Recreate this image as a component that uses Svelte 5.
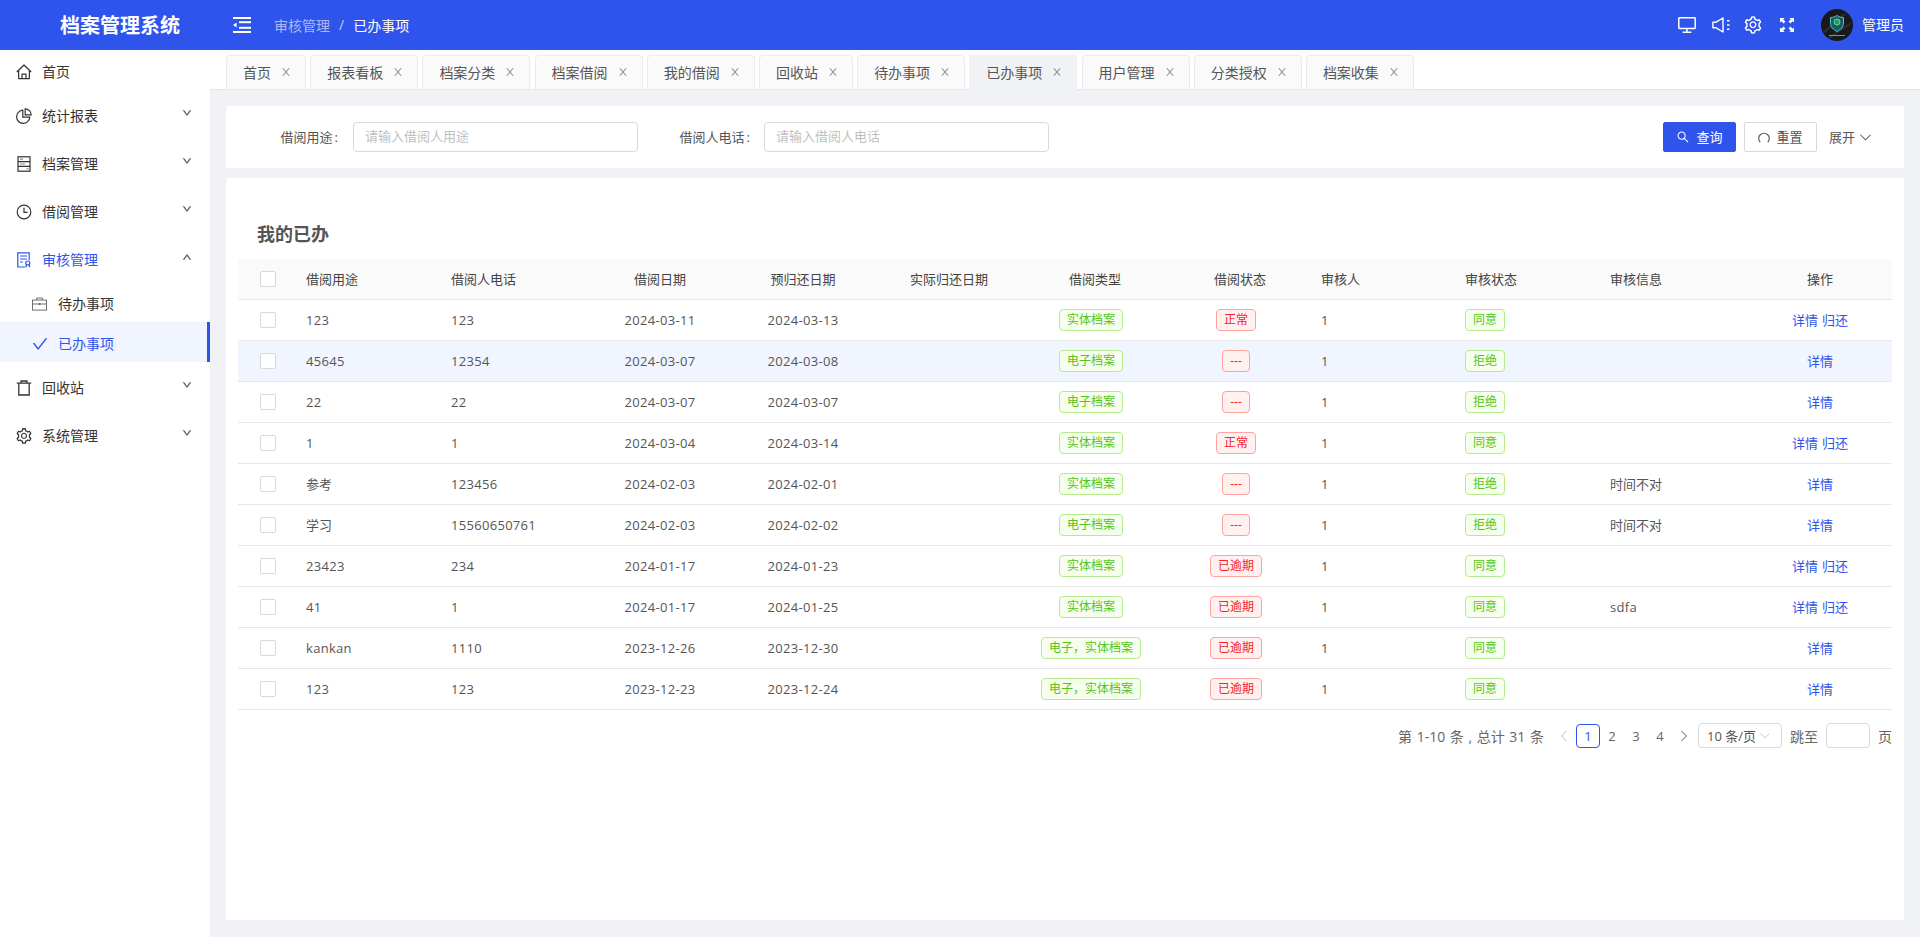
<script lang="ts">
  const tabs = ['首页', '报表看板', '档案分类', '档案借阅', '我的借阅', '回收站', '待办事项', '已办事项', '用户管理', '分类授权', '档案收集'];
  const activeTab = '已办事项';

  const columns = [
    { title: '借阅用途', width: 145 },
    { title: '借阅人电话', width: 162 },
    { title: '借阅日期', width: 126, center: true },
    { title: '预归还日期', width: 160, center: true },
    { title: '实际归还日期', width: 132, center: true },
    { title: '借阅类型', width: 160, center: true },
    { title: '借阅状态', width: 130, center: true },
    { title: '审核人', width: 144 },
    { title: '审核状态', width: 145 },
    { title: '审核信息', width: 154 },
    { title: '操作', width: 144, center: true },
  ];

  const rows = [
    { use: '123', phone: '123', from: '2024-03-11', to: '2024-03-13', type: '实体档案', state: '正常', audit: '同意', info: '', back: true },
    { use: '45645', phone: '12354', from: '2024-03-07', to: '2024-03-08', type: '电子档案', state: '---', audit: '拒绝', info: '', back: false },
    { use: '22', phone: '22', from: '2024-03-07', to: '2024-03-07', type: '电子档案', state: '---', audit: '拒绝', info: '', back: false },
    { use: '1', phone: '1', from: '2024-03-04', to: '2024-03-14', type: '实体档案', state: '正常', audit: '同意', info: '', back: true },
    { use: '参考', phone: '123456', from: '2024-02-03', to: '2024-02-01', type: '实体档案', state: '---', audit: '拒绝', info: '时间不对', back: false },
    { use: '学习', phone: '15560650761', from: '2024-02-03', to: '2024-02-02', type: '电子档案', state: '---', audit: '拒绝', info: '时间不对', back: false },
    { use: '23423', phone: '234', from: '2024-01-17', to: '2024-01-23', type: '实体档案', state: '已逾期', audit: '同意', info: '', back: true },
    { use: '41', phone: '1', from: '2024-01-17', to: '2024-01-25', type: '实体档案', state: '已逾期', audit: '同意', info: 'sdfa', back: true },
    { use: 'kankan', phone: '1110', from: '2023-12-26', to: '2023-12-30', type: '电子，实体档案', state: '已逾期', audit: '同意', info: '', back: false },
    { use: '123', phone: '123', from: '2023-12-23', to: '2023-12-24', type: '电子，实体档案', state: '已逾期', audit: '同意', info: '', back: false },
  ];

  // CJK cells sit a pixel higher than latin ones
  const isCjk = (s: string) => /[^\x00-\x7f]/.test(s);

  const gear = 'M924.8 625.7l-65.5-56c3.1-19 4.7-38.4 4.7-57.8s-1.6-38.8-4.7-57.8l65.5-56a32.03 32.03 0 0 0 9.3-35.2l-.9-2.6a443.74 443.74 0 0 0-79.7-137.9l-1.8-2.1a32.12 32.12 0 0 0-35.1-9.5l-81.3 28.9c-30-24.6-63.5-44-99.7-57.6l-15.7-85a32.05 32.05 0 0 0-25.8-25.7l-2.7-.5c-52.1-9.4-106.9-9.4-159 0l-2.7.5a32.05 32.05 0 0 0-25.8 25.7l-15.8 85.4a351.86 351.86 0 0 0-99 57.4l-81.9-29.1a32 32 0 0 0-35.1 9.5l-1.8 2.1a446.02 446.02 0 0 0-79.7 137.9l-.9 2.6c-4.5 12.5-.8 26.5 9.3 35.2l66.3 56.6c-3.1 18.8-4.6 38-4.6 57.1 0 19.2 1.5 38.4 4.6 57.1L99 625.5a32.03 32.03 0 0 0-9.3 35.2l.9 2.6c18.1 50.4 44.9 96.9 79.7 137.9l1.8 2.1a32.12 32.12 0 0 0 35.1 9.5l81.9-29.1c29.8 24.5 63.1 43.9 99 57.4l15.8 85.4a32.05 32.05 0 0 0 25.8 25.7l2.7.5a449.4 449.4 0 0 0 159 0l2.7-.5a32.05 32.05 0 0 0 25.8-25.7l15.7-85a350 350 0 0 0 99.7-57.6l81.3 28.9a32 32 0 0 0 35.1-9.5l1.8-2.1c34.8-41.1 61.6-87.5 79.7-137.9l.9-2.6c4.5-12.3.8-26.3-9.3-35zM788.3 465.9c2.5 15.1 3.8 30.6 3.8 46.1s-1.3 31-3.8 46.1l-6.6 40.1 74.7 63.9a370.03 370.03 0 0 1-42.6 73.6L721 702.8l-31.4 25.8c-23.9 19.6-50.5 35-79.3 45.8l-38.1 14.3-17.9 97a377.5 377.5 0 0 1-85 0l-17.9-97.2-37.8-14.5c-28.5-10.8-55-26.2-78.7-45.7l-31.4-25.9-93.4 33.2c-17-22.9-31.2-47.6-42.6-73.6l75.5-64.5-6.5-40c-2.4-14.9-3.7-30.3-3.7-45.5 0-15.3 1.2-30.6 3.7-45.5l6.5-40-75.5-64.5c11.3-26.1 25.6-50.7 42.6-73.6l93.4 33.2 31.4-25.9c23.7-19.5 50.2-34.9 78.7-45.7l37.9-14.3 17.9-97.2c28.1-3.2 56.8-3.2 85 0l17.9 97 38.1 14.3c28.7 10.8 55.4 26.2 79.3 45.8l31.4 25.8 92.8-32.9c17 22.9 31.2 47.6 42.6 73.6L781.8 426l6.5 39.9zM512 326c-97.2 0-176 78.8-176 176s78.8 176 176 176 176-78.8 176-176-78.8-176-176-176zm79.2 255.2A111.6 111.6 0 0 1 512 614c-29.9 0-58-11.7-79.2-32.8A111.6 111.6 0 0 1 400 502c0-29.9 11.7-58 32.8-79.2C454 401.6 482.1 390 512 390c29.9 0 58 11.6 79.2 32.8A111.6 111.6 0 0 1 624 502c0 29.9-11.7 58-32.8 79.2z';
  const close = 'M563.8 512l262.5-312.9c4.4-5.2.7-13.1-6.1-13.1h-79.8c-4.7 0-9.2 2.1-12.3 5.7L511.6 449.8 295.1 191.7c-3-3.6-7.5-5.7-12.3-5.7H203c-6.8 0-10.5 7.9-6.1 13.1L459.4 512 196.9 824.9A7.95 7.95 0 0 0 203 838h79.8c4.7 0 9.2-2.1 12.3-5.7l216.5-258.1 216.5 258.1c3 3.6 7.5 5.7 12.3 5.7h79.8c6.8 0 10.5-7.9 6.1-13.1L563.8 512z';
  const down = 'M884 256h-75c-5.1 0-9.9 2.5-12.9 6.6L512 654.2 227.9 262.6c-3-4.1-7.8-6.6-12.9-6.6h-75c-6.5 0-10.3 7.4-6.5 12.7l352.6 486.1c12.8 17.6 39 17.6 51.7 0l352.6-486.1c3.9-5.3.1-12.7-6.4-12.7z';
  const check = 'M912 190h-69.9c-9.8 0-19.1 4.5-25.1 12.2L404.7 724.5 207 474a32 32 0 0 0-25.1-12.2H112c-6.7 0-10.4 7.7-6.3 12.9l273.9 347c12.8 16.2 37.4 16.2 50.3 0l488.4-618.9c4.1-5.1.4-12.8-6.3-12.8z';
  const search = 'M909.6 854.5L649.9 594.8C690.2 542.7 712 479 712 412c0-80.2-31.3-155.4-87.9-212.1-56.6-56.7-132-87.9-212.1-87.9s-155.5 31.3-212.1 87.9C143.2 256.5 112 331.8 112 412c0 80.1 31.3 155.5 87.9 212.1C256.5 680.8 331.8 712 412 712c67 0 130.6-21.8 182.7-62l259.7 259.6a8.2 8.2 0 0 0 11.6 0l43.6-43.5a8.2 8.2 0 0 0 0-11.6zM570.4 570.4C528 612.7 471.8 636 412 636s-116-23.3-158.4-65.6C211.3 528 188 471.8 188 412s23.3-116.1 65.6-158.4C296 211.3 352.2 188 412 188s116.1 23.2 158.4 65.6S636 352.2 636 412s-23.3 116.1-65.6 158.4z';
</script>

{#snippet chevron(up = false)}
  <svg class="chevron" class:up viewBox="0 0 1024 1024" fill="currentColor" stroke="currentColor" stroke-width="60"><path d={down} /></svg>
{/snippet}

<div class="shell">
  <header class="topbar">
    <div class="logo">档案管理系统</div>
    <svg class="fold" viewBox="0 0 18 16" fill="#fff">
      <rect x="0" y="0" width="18" height="2" />
      <rect x="6" y="4.2" width="12" height="2" />
      <rect x="6" y="9.8" width="12" height="2" />
      <rect x="0" y="14" width="18" height="2" />
      <path d="M0 8l3.6-2.6v5.2z" />
    </svg>
    <nav class="crumbs">
      <span class="crumb-parent">审核管理</span>
      <span class="crumb-sep">/</span>
      <span>已办事项</span>
    </nav>
    <div class="top-right">
      <svg class="ticon" viewBox="0 0 18 16" fill="none" stroke="#fff" stroke-width="1.5">
        <rect x="0.8" y="0.8" width="16.4" height="10.6" rx="0.6" />
        <path d="M9 11.4v3.6M4.6 15.2h8.8" />
      </svg>
      <svg class="ticon" viewBox="0 0 18 16" fill="none" stroke="#fff" stroke-width="1.4">
        <path d="M0.9 5.2h3.200L11 1v14L4.100 10.800H0.900z" stroke-linejoin="round" />
        <path d="M15 3.800h2.500M15 8h2.500M15 12.200h2.500" stroke-width="1.600" />
      </svg>
      <svg class="ticon gear" viewBox="0 0 1024 1024" fill="#fff"><path d={gear} /></svg>
      <svg class="ticon full" viewBox="0 0 14 14" fill="#fff">
        <path d="M0 0h4.600L3.200 1.400 5.400 3.600 3.600 5.400 1.400 3.200 0 4.600zM14 0v4.600L12.600 3.200 10.400 5.400 8.600 3.600 10.800 1.400 9.400 0zM0 14V9.400l1.400 1.400 2.200-2.200 1.800 1.800-2.200 2.200L4.600 14zM14 14H9.400l1.400-1.400-2.200-2.200 1.800-1.800 2.200 2.200L14 9.400z" />
      </svg>
      <svg class="avatar" viewBox="0 0 32 32">
        <circle cx="16" cy="16" r="16" fill="#17191c" />
        <path d="M2 24L24 5M8 29L30 14" stroke="#2b2e31" stroke-width="2" />
        <path d="M9.500 8.500c2.500 0 4.500-.7 6.500-2 2 1.300 4 2 6.500 2v5.500c0 4-2.500 6.500-6.500 8.500-4-2-6.500-4.500-6.500-8.500z" fill="#1c5a62" stroke="#4fc3c0" stroke-width="1" />
        <circle cx="16" cy="13" r="3" fill="#1f9d5b" stroke="#7fe0c0" stroke-width="0.8" />
        <rect x="8" y="26" width="16" height="1" fill="#8a8d90" />
      </svg>
      <span class="user">管理员</span>
    </div>
  </header>

  <div class="body">
    <aside class="sidebar">
      <a class="item first" href="#home">
        <svg class="micon" viewBox="0 0 16 16" fill="none" stroke="#333" stroke-width="1.2" stroke-linejoin="round">
          <path d="M0.800 8L8 1l7.200 7" />
          <path d="M2.600 6.600V14.600h10.800V6.600" />
          <path d="M6 14.600V10.200h4v4.400" />
        </svg>
        <span>首页</span>
      </a>
      <a class="item" href="#stat">
        <svg class="micon" viewBox="0 0 16 16" fill="none" stroke="#333" stroke-width="1.200">
          <path d="M6.800 2.200a6.600 6.600 0 1 0 7 7H6.800z" />
          <path d="M9.200 0.800a6 6 0 0 1 6 6h-6z" />
        </svg>
        <span>统计报表</span>
        {@render chevron()}
      </a>
      <a class="item" href="#files">
        <svg class="micon" viewBox="0 0 16 16" fill="none" stroke="#333" stroke-width="1.200">
          <rect x="2" y="0.800" width="12" height="14.400" />
          <path d="M2 5.600h12M2 10.400h12" />
          <path d="M4 3.200h3M4 8h5M10.500 12.800h2" stroke="#888" />
        </svg>
        <span>档案管理</span>
        {@render chevron()}
      </a>
      <a class="item" href="#borrow">
        <svg class="micon" viewBox="0 0 16 16" fill="none" stroke="#333" stroke-width="1.200">
          <circle cx="8" cy="8" r="6.800" />
          <path d="M8 3.800V8.400h3.600" />
        </svg>
        <span>借阅管理</span>
        {@render chevron()}
      </a>
      <a class="item open" href="#audit">
        <svg class="micon" viewBox="0 0 16 16" fill="none" stroke="#2f54eb" stroke-width="1.200">
          <path d="M9 15H1.800V0.800h11.400V8" />
          <path d="M4 4h7M4 7h7M4 10h3" />
          <circle cx="11.800" cy="11" r="2" />
          <path d="M9.800 15.200l.8-2.500M13.800 15.200l-.8-2.500" />
        </svg>
        <span>审核管理</span>
        {@render chevron(true)}
      </a>
      <a class="sub" href="#todo">
        <svg class="sicon" viewBox="0 0 16 14" fill="none" stroke="#666" stroke-width="1">
          <rect x="0.500" y="2.800" width="15" height="10.700" />
          <path d="M5 2.800V0.600h6v2.200M0.500 7h15" />
          <rect x="7" y="6" width="2" height="2" fill="#666" stroke="none" />
        </svg>
        <span>待办事项</span>
      </a>
      <a class="sub active" href="#done">
        <svg class="sicon tick" viewBox="0 0 1024 1024" fill="#2f54eb"><path d={check} /></svg>
        <span>已办事项</span>
      </a>
      <a class="item recycle" href="#bin">
        <svg class="micon" viewBox="0 0 16 16" fill="none" stroke="#333" stroke-width="1.300">
          <path d="M0.800 3.200h14.400M5 3.200V1h6v2.200" />
          <path d="M2.800 3.200V15h10.400V3.200" />
        </svg>
        <span>回收站</span>
        {@render chevron()}
      </a>
      <a class="item" href="#system">
        <svg class="micon cog" viewBox="0 0 1024 1024" fill="#333"><path d={gear} /></svg>
        <span>系统管理</span>
        {@render chevron()}
      </a>
    </aside>

    <main class="main">
      <div class="tabs">
        {#each tabs as tab}
          <div class="tab" class:current={tab === activeTab}>
            <span>{tab}</span>
            <svg class="tab-x" viewBox="0 0 1024 1024" fill="currentColor"><path d={close} /></svg>
          </div>
        {/each}
      </div>

      <div class="page">
        <section class="card filter">
          <label class="label" for="f-use">借阅用途{'\u2009'}:</label>
          <input id="f-use" class="field" placeholder="请输入借阅人用途" />
          <label class="label second" for="f-phone">借阅人电话{'\u2009'}:</label>
          <input id="f-phone" class="field" placeholder="请输入借阅人电话" />
          <div class="actions">
            <button class="btn primary">
              <svg class="btn-icon" viewBox="0 0 1024 1024" fill="currentColor"><path d={search} /></svg>
              查询
            </button>
            <button class="btn">
              <svg class="btn-icon reload" viewBox="0 0 12 12" fill="none" stroke="currentColor" stroke-width="1.100"><path d="M2.200 11.200A5.300 5.300 0 1 1 9.800 11.200" /></svg>
              重置
            </button>
            <span class="expand">展开 <svg class="expand-icon" viewBox="0 0 12 7" fill="none" stroke="currentColor" stroke-width="1.100"><path d="M0.500 0.500L6 6l5.500-5.500" /></svg></span>
          </div>
        </section>

        <section class="card list">
          <h2>我的已办</h2>
          <table>
            <colgroup>
              <col style:width="52px" />
              {#each columns as c}
                <col style:width="{c.width}px" />
              {/each}
            </colgroup>
            <thead>
              <tr>
                <th class="check"><span class="box"></span></th>
                {#each columns as c}
                  <th class:center={c.center}>{c.title}</th>
                {/each}
              </tr>
            </thead>
            <tbody>
              {#each rows as row, i}
                <tr class:hovered={i === 1}>
                  <td class="check"><span class="box"></span></td>
                  <td class:cjk={isCjk(row.use)}>{row.use}</td>
                  <td>{row.phone}</td>
                  <td class="center">{row.from}</td>
                  <td class="center">{row.to}</td>
                  <td class="center"></td>
                  <td class="center"><span class="tag green">{row.type}</span></td>
                  <td class="center"><span class="tag red">{row.state}</span></td>
                  <td>1</td>
                  <td><span class="tag green">{row.audit}</span></td>
                  <td class:cjk={isCjk(row.info)}>{row.info}</td>
                  <td class="center cjk"><span class="link">详情</span>{#if row.back}<span class="link back">归还</span>{/if}</td>
                </tr>
              {/each}
            </tbody>
          </table>

          <div class="pager">
            <span class="total">第 1-10 条 , 总计 31 条</span>
            <svg class="arrow off" viewBox="0 0 10 12" fill="none" stroke="currentColor" stroke-width="1"><path d="M7.500 1L2.500 6l5 5" /></svg>
            <span class="pg on">1</span>
            <span class="pg">2</span>
            <span class="pg">3</span>
            <span class="pg">4</span>
            <svg class="arrow" viewBox="0 0 10 12" fill="none" stroke="currentColor" stroke-width="1"><path d="M2.500 1l5 5-5 5" /></svg>
            <span class="size">10 条/页<svg class="size-icon" viewBox="0 0 12 7" fill="none" stroke="currentColor" stroke-width="1"><path d="M0.500 0.500L6 6l5.500-5.500" /></svg></span>
            <span class="jump">跳至</span>
            <span class="jump-box"></span>
            <span class="jump">页</span>
          </div>
        </section>
      </div>
    </main>
  </div>
</div>

<style>
  :global(body) {
    margin: 0;
    background: #f0f2f5;
    font-family: "Open Sans", "Noto Sans CJK SC", sans-serif;
    font-size: 13px;
    color: #555;
  }

  a {
    color: inherit;
    text-decoration: none;
  }

  .shell {
    display: flex;
    flex-direction: column;
    height: 937px;
    overflow: hidden;
  }

  .topbar {
    display: flex;
    align-items: center;
    flex: none;
    height: 50px;
    background: #2f54eb;
    color: #fff;
  }

  .logo {
    width: 233px;
    box-sizing: border-box;
    padding: 0 0 2px 60px;
    font-size: 20px;
    font-weight: 700;
    white-space: nowrap;
  }

  .fold {
    width: 18px;
    height: 16px;
  }

  .crumbs {
    display: flex;
    align-items: center;
    margin-left: 23px;
    font-size: 14px;
    padding-bottom: 1px;
  }

  .crumb-parent {
    color: rgba(255, 255, 255, 0.6);
  }

  .crumb-sep {
    margin: 0 9px;
    color: rgba(255, 255, 255, 0.7);
  }

  .top-right {
    display: flex;
    align-items: center;
    margin-left: auto;
    padding-right: 16px;
  }

  .ticon {
    width: 18px;
    height: 16px;
    margin-right: 16px;
  }

  .ticon.gear {
    width: 20px;
    height: 20px;
    margin: 0 17px 0 -3px;
  }

  .ticon.full {
    width: 14px;
    height: 14px;
    margin-right: 27px;
  }

  .avatar {
    width: 32px;
    height: 32px;
    margin-right: 9px;
  }

  .user {
    font-size: 14px;
    margin-bottom: 2px;
  }

  .body {
    display: flex;
    flex: 1;
    min-height: 0;
  }

  .sidebar {
    flex: none;
    width: 210px;
    background: #fff;
    color: #333;
    font-size: 14px;
  }

  .item {
    display: flex;
    align-items: center;
    box-sizing: border-box;
    height: 48px;
    padding: 0 18px 0 16px;
  }

  .item > span,
  .sub > span {
    margin-bottom: 2px;
  }

  .item.first {
    height: 44px;
    margin-bottom: -2px;
  }

  .item.open {
    height: 46px;
    padding-top: 2px;
    color: #2f54eb;
  }

  .item.recycle {
    margin-top: 2px;
  }

  .micon {
    flex: none;
    width: 16px;
    height: 16px;
    margin-right: 10px;
  }

  .micon.cog {
    width: 18px;
    height: 18px;
    margin: 0 9px 0 -1px;
  }

  .chevron {
    width: 10px;
    height: 10px;
    margin: -7px 0 0 auto;
    color: #555;
  }

  .chevron.up {
    transform: rotate(180deg);
  }

  .sub {
    display: flex;
    align-items: center;
    height: 40px;
    padding: 3px 0 0 32px;
    box-sizing: border-box;
  }

  .sub.active {
    background: #f0f5ff;
    color: #2f54eb;
    border-right: 3px solid #2f54eb;
  }

  .sicon {
    flex: none;
    width: 15px;
    height: 14px;
    margin-right: 11px;
  }

  .sicon.tick {
    width: 18px;
    height: 18px;
    margin: 0 9.5px 0 -1.5px;
  }

  .main {
    flex: 1;
    min-width: 0;
    display: flex;
    flex-direction: column;
  }

  .tabs {
    display: flex;
    align-items: flex-end;
    gap: 4.2px;
    flex: none;
    height: 40px;
    box-sizing: border-box;
    padding-left: 16px;
    background: #fff;
    border-bottom: 1px solid #e4e6ea;
    font-size: 14px;
  }

  .tab {
    display: flex;
    align-items: center;
    gap: 9px;
    box-sizing: border-box;
    height: 35px;
    margin-bottom: -1px;
    padding: 0 13px 2px 16px;
    background: #fafafa;
    border: 1px solid #ebebeb;
    border-bottom-color: #e4e6ea;
    border-radius: 4px 4px 0 0;
    color: #555;
  }

  .tab.current {
    background: #f0f2f5;
    border-color: #f0f2f5;
    border-radius: 0;
  }

  .tab-x {
    width: 12px;
    height: 12px;
    color: #888;
  }

  .page {
    flex: 1;
    display: flex;
    flex-direction: column;
    gap: 10px;
    padding: 16px 16px 17px;
    min-height: 0;
  }

  .card {
    background: #fff;
    border-radius: 2px;
  }

  .filter {
    display: flex;
    align-items: center;
    flex: none;
    height: 62px;
  }

  .label {
    flex: none;
    width: 127px;
    box-sizing: border-box;
    padding: 0 15px 2px 0;
    text-align: right;
    color: #555;
  }

  .label.second {
    width: 126px;
    padding-right: 14px;
  }

  .field {
    flex: none;
    width: 285px;
    height: 30px;
    box-sizing: border-box;
    padding: 0 11px 2px;
    border: 1px solid #d9d9d9;
    border-radius: 4px;
    font: inherit;
    outline: none;
  }

  .field::placeholder {
    color: #bfbfbf;
  }

  .actions {
    display: flex;
    align-items: center;
    margin-left: auto;
    padding-right: 33px;
  }

  .btn {
    display: flex;
    align-items: center;
    justify-content: center;
    gap: 6px;
    width: 73px;
    height: 30px;
    padding: 0 0 2px;
    margin-right: 8px;
    background: #fff;
    border: 1px solid #d9d9d9;
    border-radius: 2px;
    color: #555;
    font: inherit;
  }

  .btn.primary {
    background: #2f54eb;
    border-color: #2f54eb;
    color: #fff;
  }

  .btn-icon {
    width: 14px;
    height: 14px;
    margin-top: 2px;
  }

  .btn-icon.reload {
    width: 12px;
    height: 12px;
  }

  .expand {
    display: flex;
    align-items: center;
    gap: 5px;
    margin-left: 4px;
    padding-bottom: 2px;
    color: #555;
  }

  .expand-icon {
    width: 11px;
    height: 7px;
    margin-top: 2px;
  }

  .list {
    flex: 1;
    padding: 42px 12px 0;
  }

  h2 {
    margin: 0 0 11px 19px;
    font-size: 18px;
    line-height: 28px;
    font-weight: 700;
    color: #555;
  }

  table {
    width: 1654px;
    table-layout: fixed;
    border-collapse: separate;
    border-spacing: 0;
  }

  th,
  td {
    box-sizing: border-box;
    height: 41px;
    padding: 0 16px;
    text-align: left;
    border-bottom: 1px solid #e8e8e8;
    font-size: 13px;
    font-weight: 400;
    white-space: nowrap;
  }

  td {
    letter-spacing: 0.3px;
  }

  th,
  td.cjk {
    padding-bottom: 2px;
  }

  td.cjk {
    letter-spacing: 0;
  }

  th {
    background: #fafafa;
    color: #444;
  }

  th:first-child {
    border-top-left-radius: 2px;
  }

  th:last-child {
    border-top-right-radius: 2px;
  }

  th.check {
    padding-bottom: 0;
  }

  .center {
    text-align: center;
  }

  .check {
    padding: 0 0 0 22px;
  }

  .box {
    display: block;
    width: 16px;
    height: 16px;
    box-sizing: border-box;
    background: #fff;
    border: 1px solid #d9d9d9;
    border-radius: 2px;
  }

  tr.hovered td {
    background: #f0f5ff;
  }

  .tag {
    display: inline-block;
    vertical-align: middle;
    box-sizing: border-box;
    height: 22px;
    line-height: 20px;
    padding: 0 7px;
    margin-right: 8px;
    border: 1px solid;
    border-radius: 4px;
    font-size: 12px;
    letter-spacing: 0;
  }

  .green {
    color: #52c41a;
    background: #f6ffed;
    border-color: #b7eb8f;
  }

  .red {
    color: #f5222d;
    background: #fff1f0;
    border-color: #ffa39e;
  }

  .link {
    color: #2f54eb;
  }

  .back {
    margin-left: 4px;
  }

  .pager {
    display: flex;
    align-items: center;
    justify-content: flex-end;
    height: 25px;
    margin-top: 13px;
    color: #555;
    font-size: 13px;
  }

  .total {
    margin-right: 8px;
    font-size: 14px;
    word-spacing: 1px;
    color: #666;
  }

  .arrow {
    width: 24px;
    height: 12px;
    color: #555;
  }

  .arrow.off {
    color: #bbb;
  }

  .pg {
    width: 24px;
    height: 24px;
    line-height: 22px;
    box-sizing: border-box;
    text-align: center;
    border: 1px solid transparent;
    border-radius: 4px;
    font-size: 13px;
    color: #666;
  }

  .pg.on {
    border-color: #2f54eb;
    color: #2f54eb;
  }

  .size {
    display: flex;
    align-items: center;
    box-sizing: border-box;
    width: 84px;
    height: 25px;
    margin-left: 2px;
    padding: 0 8px;
    border: 1px solid #d9d9d9;
    border-radius: 4px;
    white-space: nowrap;
  }

  .size-icon {
    width: 10px;
    height: 6px;
    margin-left: 4px;
    color: #bbb;
  }

  .jump {
    margin-left: 8px;
    font-size: 14px;
    color: #666;
  }

  .jump-box {
    width: 44px;
    height: 25px;
    box-sizing: border-box;
    margin-left: 8px;
    border: 1px solid #d9d9d9;
    border-radius: 4px;
  }
</style>
